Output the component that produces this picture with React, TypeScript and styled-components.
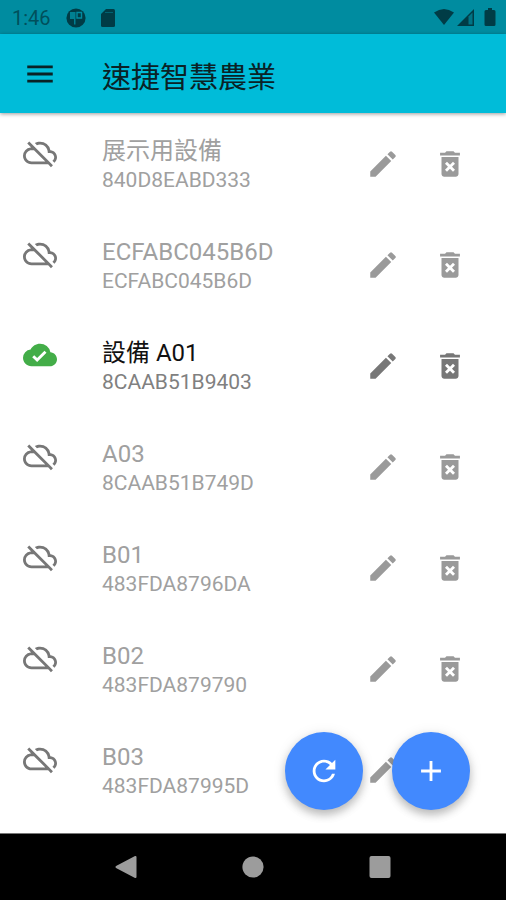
import React from 'react';
import styled, { createGlobalStyle } from 'styled-components';
import { MdAdd, MdCloudDone, MdDeleteForever, MdEdit, MdMenu, MdOutlineCloudOff, MdRefresh } from 'react-icons/md';

const GlobalStyle = createGlobalStyle`
  * { box-sizing: border-box; }
  body { margin: 0; background: #fff; }
  button { font: inherit; }
`;

const Screen = styled.div`
  display: flex;
  flex-direction: column;
  height: 100vh;
  overflow: hidden;
  background: #fff;
  font-family: Roboto, 'Noto Sans CJK TC', sans-serif;
`;

const StatusBar = styled.div`
  display: flex;
  align-items: center;
  flex: none;
  height: 34px;
  padding: 2px 8px 0 12px;
  background: #008ca0;
  color: #003c46;
`;

const Clock = styled.time`
  font-size: 20px;
  line-height: 24px;
  color: #00505c;
`;

const StatusIcons = styled.div<{ $end?: boolean }>`
  display: flex;
  align-items: center;
  gap: ${(p) => (p.$end ? 0 : 12)}px;
  margin-left: ${(p) => (p.$end ? 'auto' : '15px')};
`;

const AppBar = styled.header`
  display: flex;
  align-items: center;
  flex: none;
  gap: 38px;
  height: 79px;
  padding: 0 16px;
  background: #00bcd9;
  color: #0a2226;
  box-shadow: 0 1px 4px rgba(0, 0, 0, 0.4);
  z-index: 1;
`;

const Title = styled.h1`
  margin: 0;
  padding-top: 8px;
  font-size: 29px;
  line-height: 40px;
  font-weight: 400;
`;

const IconButton = styled.button`
  display: grid;
  place-items: center;
  flex: none;
  width: 48px;
  height: 48px;
  padding: 0;
  border: 0;
  background: none;
  color: inherit;
  font-size: 34px;
`;

const Content = styled.main`
  position: relative;
  flex: 1;
  min-height: 0;
`;

const DeviceList = styled.ul`
  height: 100%;
  margin: 0;
  padding: 0;
  overflow: hidden;
  list-style: none;
`;

const DeviceRow = styled.li<{ $online: boolean }>`
  display: flex;
  align-items: center;
  height: 101px;
  padding: 0 32px 0 23px;
  color: ${(p) => (p.$online ? '#777' : '#9a9a9a')};
`;

const StateIcon = styled.span<{ $online: boolean }>`
  display: flex;
  align-self: flex-start;
  flex: none;
  width: 79px;
  padding-top: 23px;
  color: ${(p) => (p.$online ? '#43ad48' : '#777')};
  font-size: 34px;
`;

const Labels = styled.div`
  display: flex;
  flex-direction: column;
  flex: 1;
  min-width: 0;
  padding-top: 2px;
`;

const DeviceName = styled.span<{ $online: boolean }>`
  font-size: 24px;
  line-height: 30px;
  color: ${(p) => (p.$online ? '#111' : '#a0a0a0')};
`;

const DeviceId = styled.span<{ $online: boolean }>`
  font-size: 21px;
  line-height: 28px;
  color: ${(p) => (p.$online ? '#808080' : '#a0a0a0')};
`;

const Actions = styled.div`
  display: flex;
  gap: 19px;
`;

const FabGroup = styled.div`
  position: absolute;
  right: 36px;
  bottom: 23px;
  display: flex;
  gap: 29px;
`;

const Fab = styled.button`
  display: grid;
  place-items: center;
  width: 78px;
  height: 78px;
  padding: 0;
  border: 0;
  border-radius: 50%;
  background: #4289fe;
  color: #fff;
  font-size: 34px;
  box-shadow: 0 5px 8px rgba(0, 0, 0, 0.22), 0 2px 14px rgba(0, 0, 0, 0.1);
`;

const NavBar = styled.nav`
  display: flex;
  align-items: center;
  justify-content: center;
  flex: none;
  gap: 79px;
  height: 67px;
  border-top: 1px solid #777;
  background: #000;
  color: #9c9c9c;
`;

const devices = [
  { name: '展示用設備', id: '840D8EABD333', online: false },
  { name: 'ECFABC045B6D', id: 'ECFABC045B6D', online: false },
  { name: '設備 A01', id: '8CAAB51B9403', online: true },
  { name: 'A03', id: '8CAAB51B749D', online: false },
  { name: 'B01', id: '483FDA8796DA', online: false },
  { name: 'B02', id: '483FDA879790', online: false },
  { name: 'B03', id: '483FDA87995D', online: false },
];

export default function App() {
  return (
    <Screen>
      <GlobalStyle />
      <StatusBar>
        <Clock>1:46</Clock>
        <StatusIcons>
          <svg width="20" height="20" viewBox="0 0 20 20" aria-hidden="true">
            <circle cx="10" cy="10" r="9.6" fill="currentColor" />
            <path d="M4 4h5.500v12.500H8V11H4z" fill="#008ca0" fillOpacity=".85" />
            <path d="M11 4.500h4.500V10H11z" fill="none" stroke="#008ca0" strokeWidth="1.400" />
          </svg>
          <svg width="20" height="20" viewBox="0 0 20 20" aria-hidden="true">
            <path d="M8 1h7.500A1.500 1.500 0 0 1 17 2.500v15a1.500 1.500 0 0 1-1.500 1.500h-11A1.500 1.500 0 0 1 3 17.500V6z" fill="currentColor" />
            <path d="M7 4.500h8" stroke="#008ca0" strokeOpacity=".5" />
          </svg>
        </StatusIcons>
        <StatusIcons $end>
          <svg width="64" height="20" viewBox="0 0 64 20" aria-hidden="true">
            <path d="M0 4.500Q10-2.500 20 4.500L10 17z" fill="currentColor" />
            <path d="M23 18L40 1v17z" fill="currentColor" />
            <path d="M34.500 8.500L38.500 4.500V16.500H34.500z" fill="#008ca0" fillOpacity=".7" />
            <path d="M54 0h4v2h2a1.500 1.500 0 0 1 1.500 1.500v13A1.500 1.500 0 0 1 60 18h-8a1.500 1.500 0 0 1-1.500-1.500v-13A1.500 1.500 0 0 1 52 2h2z" fill="currentColor" />
          </svg>
        </StatusIcons>
      </StatusBar>
      <AppBar>
        <IconButton aria-label="選單"><MdMenu /></IconButton>
        <Title>速捷智慧農業</Title>
      </AppBar>
      <Content>
        <DeviceList>
          {devices.map((d) => (
            <DeviceRow key={d.id} $online={d.online}>
              <StateIcon $online={d.online}>{d.online ? <MdCloudDone /> : <MdOutlineCloudOff />}</StateIcon>
              <Labels>
                <DeviceName $online={d.online}>{d.name}</DeviceName>
                <DeviceId $online={d.online}>{d.id}</DeviceId>
              </Labels>
              <Actions>
                <IconButton aria-label={`編輯 ${d.name}`}><MdEdit /></IconButton>
                <IconButton aria-label={`刪除 ${d.name}`}><MdDeleteForever /></IconButton>
              </Actions>
            </DeviceRow>
          ))}
        </DeviceList>
        <FabGroup>
          <Fab aria-label="重新整理"><MdRefresh /></Fab>
          <Fab aria-label="新增"><MdAdd /></Fab>
        </FabGroup>
      </Content>
      <NavBar>
        <IconButton aria-label="返回">
          <svg width="24" height="24" viewBox="0 0 24 24">
            <path d="M21.500 2v20L2.500 12z" fill="currentColor" stroke="currentColor" strokeWidth="2" strokeLinejoin="round" />
          </svg>
        </IconButton>
        <IconButton aria-label="主畫面">
          <svg width="24" height="24" viewBox="0 0 24 24"><circle cx="12" cy="12" r="10.600" fill="currentColor" /></svg>
        </IconButton>
        <IconButton aria-label="最近使用">
          <svg width="24" height="24" viewBox="0 0 24 24"><rect x="1.500" y="1" width="21" height="22" rx="2" fill="currentColor" /></svg>
        </IconButton>
      </NavBar>
    </Screen>
  );
}
